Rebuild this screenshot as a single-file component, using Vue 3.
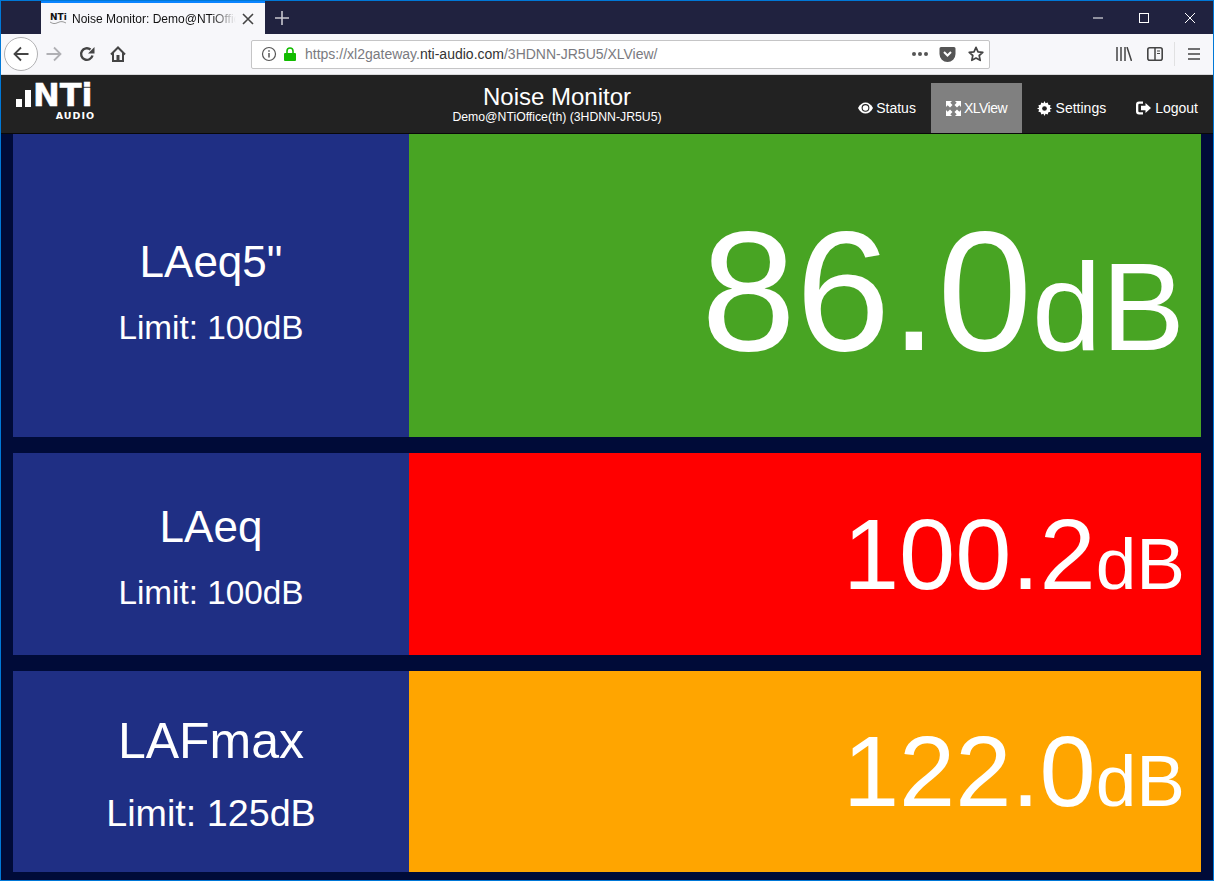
<script setup>
const rows = [
  { name: 'LAeq5"', limit: 'Limit: 100dB', value: '86.0', color: '#48a423', cls: 'big', nameCls: 'n1' },
  { name: 'LAeq', limit: 'Limit: 100dB', value: '100.2', color: '#ff0000', cls: 'mid', nameCls: 'n1' },
  { name: 'LAFmax', limit: 'Limit: 125dB', value: '122.0', color: '#ffa500', cls: 'mid last', nameCls: 'n2' },
]
</script>

<template>
  <div class="window">
    <div class="tabbar">
      <div class="tab">
        <span class="favicon">NTi<svg width="16" height="3" viewBox="0 0 16 3"><path d="M0 1c3 2 5 2 8 .5s5-1 8 .5" stroke="#999" fill="none"/></svg></span>
        <span class="tab-title">Noise Monitor: Demo@NTiOffice(th)</span>
        <svg class="tab-x" width="12" height="12" viewBox="0 0 12 12"><path d="M1 1l10 10M11 1L1 11" stroke="#444" stroke-width="1.6" fill="none"/></svg>
      </div>
      <svg class="newtab" width="16" height="16" viewBox="0 0 16 16"><path d="M8 1v14M1 8h14" stroke="#c8c8d0" stroke-width="1.6" fill="none"/></svg>
      <div class="winctl">
        <svg width="12" height="12" viewBox="0 0 12 12"><path d="M1 6h10" stroke="#fff" fill="none"/></svg>
        <svg width="12" height="12" viewBox="0 0 12 12"><rect x="1.5" y="1.5" width="9" height="9" stroke="#fff" fill="none"/></svg>
        <svg width="12" height="12" viewBox="0 0 12 12"><path d="M1 1l10 10M11 1L1 11" stroke="#fff" fill="none"/></svg>
      </div>
    </div>
    <div class="toolbar">
      <div class="backbtn">
        <svg width="16" height="16" viewBox="0 0 16 16"><path d="M15.500 8H1.500M8 1.500L1.500 8 8 14.500" stroke="#444" stroke-width="1.8" fill="none"/></svg>
      </div>
      <svg class="tb fwd" width="16" height="16" viewBox="0 0 16 16"><path d="M.5 8h14M8 1.500L14.500 8 8 14.500" stroke="#b0b0b4" stroke-width="1.8" fill="none"/></svg>
      <svg class="tb reload" width="16" height="16" viewBox="0 0 16 16"><path d="M13.500 9.500A5.800 5.800 0 1 1 11.500 3.500" stroke="#444" stroke-width="2.400" fill="none"/><path d="M15.500 1v6.500H9z" fill="#444"/></svg>
      <svg class="tb home" width="16" height="16" viewBox="0 0 16 16"><path d="M1 8.500l7-7 7 7M3 7v8h10V7" stroke="#444" stroke-width="2" fill="none"/><rect x="6.500" y="9" width="3" height="6" fill="#444"/></svg>
      <div class="urlbar">
        <svg width="16" height="16" viewBox="0 0 16 16"><circle cx="8" cy="8" r="6.500" stroke="#555" stroke-width="1.200" fill="none"/><path d="M8 7v4.500M8 4.200v1.600" stroke="#555" stroke-width="1.500" fill="none"/></svg>
        <svg class="lock" width="14" height="14" viewBox="0 0 14 14"><path d="M4 6V4a3 3 0 0 1 6 0v2" stroke="#12bc00" stroke-width="1.600" fill="none"/><rect x="1" y="6" width="12" height="8" rx="1" fill="#12bc00"/></svg>
        <span class="url"><span class="dim">https://xl2gateway.</span><span class="host">nti-audio.com</span><span class="dim">/3HDNN-JR5U5/XLView/</span></span>
        <span class="dots"><i></i><i></i><i></i></span>
        <svg class="pocket" width="17" height="15" viewBox="0 0 16 15"><path d="M1.500 0h13A1.500 1.500 0 0 1 16 1.500V7a8 8 0 0 1-16 0V1.500A1.500 1.500 0 0 1 1.500 0z" fill="#555"/><path d="M4.500 5L8 8.500 11.500 5" stroke="#fff" stroke-width="2" fill="none"/></svg>
        <svg class="star" width="16" height="16" viewBox="0 0 16 16"><path d="M8 1.300l2 4.500 4.800.5-3.600 3.200 1 4.800L8 12l-4.200 2.300 1-4.800L1.200 6.300 6 5.800z" stroke="#444" stroke-width="1.700" fill="none" stroke-linejoin="round"/></svg>
      </div>
      <svg class="lib" width="16" height="14" viewBox="0 0 16 14"><path d="M1 0v14M5 0v14M9 0v14M11 0l4.500 14" stroke="#444" stroke-width="1.500" fill="none"/></svg>
      <svg class="side" width="16" height="14" viewBox="0 0 16 14"><rect x=".8" y=".8" width="14.400" height="12.400" rx="2" stroke="#444" stroke-width="1.600" fill="none"/><path d="M8 1v12" stroke="#444" stroke-width="1.500"/><path d="M10 4h3M10 6.500h3" stroke="#444"/></svg>
      <span class="sep"></span>
      <svg class="menu" width="12" height="12" viewBox="0 0 12 12"><path d="M0 1h12M0 6h12M0 11h12" stroke="#444" stroke-width="1.700" fill="none"/></svg>
    </div>
    <header class="appbar">
      <div class="logo">
        <div class="logo-main">
          <span class="bars"><i class="b1"></i><i class="b2"></i></span>
          <span class="logo-text">NTi</span>
        </div>
        <div class="logo-sub">AUDIO</div>
      </div>
      <div class="title">
        <div class="t1">Noise Monitor</div>
        <div class="t2">Demo@NTiOffice(th) (3HDNN-JR5U5)</div>
      </div>
      <nav class="nav">
        <a class="item">
          <svg width="15" height="12" viewBox="0 0 15 12"><path d="M0 6C2 2.200 4.500.4 7.500.4S13 2.200 15 6C13 9.800 10.500 11.600 7.500 11.600S2 9.800 0 6z" fill="#fff"/><circle cx="7.500" cy="5.800" r="3.900" fill="#222"/><circle cx="7.500" cy="6" r="2.800" fill="#fff"/></svg>
          Status
        </a>
        <a class="item active">
          <svg width="15" height="15" viewBox="0 0 15 15"><path d="M0 0h6L4.300 1.700 6.500 4 4 6.500 1.700 4.300 0 6zM15 0v6l-1.700-1.700L11 6.500 8.500 4l2.200-2.300L9 0zM0 15V9l1.700 1.700L4 8.500 6.500 11l-2.200 2.300L6 15zM15 15H9l1.700-1.700L8.500 11 11 8.500l2.300 2.200L15 9z" fill="#fff"/></svg>
          XLView
        </a>
        <a class="item wide">
          <svg width="15" height="15" viewBox="0 0 14 14"><path d="M7 0l1 2 2-.7.600 2.100 2.100.600L12 6l2 1-2 1 .7 2-2.100.600-.6 2.100L8 12l-1 2-1-2-2 .7-.6-2.100-2.100-.600L2 8 0 7l2-1-.7-2 2.100-.600.600-2.100L6 2z" fill="#fff"/><circle cx="7" cy="7" r="2.200" fill="#222"/></svg>
          Settings
        </a>
        <a class="item wider">
          <svg width="15" height="14" viewBox="0 0 15 14"><path d="M7 .5H3A3 3 0 0 0 0 3.500v7a3 3 0 0 0 3 3h4v-2.300H3.500a1.200 1.200 0 0 1-1.200-1.200V4a1.200 1.200 0 0 1 1.200-1.200H7z" fill="#fff"/><path d="M9.500 2L15 7l-5.500 5V9.300H5V4.700h4.500z" fill="#fff"/></svg>
          Logout
        </a>
      </nav>
    </header>
    <main class="content">
      <section v-for="r in rows" :key="r.name" class="row" :class="r.cls">
        <div class="label">
          <div class="name" :class="r.nameCls">{{ r.name }}</div>
          <div class="limit" :class="r.nameCls">{{ r.limit }}</div>
        </div>
        <div class="reading" :style="{ background: r.color }">
          <div class="figure"><span class="val">{{ r.value }}</span><span class="unit">dB</span></div>
        </div>
      </section>
    </main>
  </div>
</template>

<style>
html, body { margin: 0; overflow: hidden; }
</style>

<style scoped>
.window {
  width: 1214px; height: 881px; box-sizing: border-box;
  border: 1px solid #0078d7;
  background: #000b38;
  display: flex; flex-direction: column;
  font-family: "Liberation Sans", Arial, sans-serif;
  overflow: hidden;
}
.tabbar { height: 33px; background: #20223f; display: flex; align-items: flex-start; flex: none; }
.tab {
  margin-left: 40px; width: 224px; height: 33px; background: #f7f7fa;
  border-top: 2px solid #0a84ff; box-sizing: border-box;
  display: flex; align-items: center; padding: 0 11px 0 9px;
}
.favicon { font: bold 9px/8px "DejaVu Sans", sans-serif; width: 16px; margin-right: 6px; color: #111; flex: none; display: flex; flex-direction: column; }
.tab-title {
  font: 12px "Liberation Sans", sans-serif; color: #111; white-space: nowrap; overflow: hidden;
  flex: 1; -webkit-mask-image: linear-gradient(to right, #000 85%, transparent);
  mask-image: linear-gradient(to right, #000 85%, transparent);
}
.tab-x { margin-left: 6px; flex: none; }
.newtab { margin: 9px 0 0 9px; }
.winctl { margin-left: auto; display: flex; gap: 34px; padding: 11px 17px 0 0; }
.toolbar {
  background: #f7f7fa; border-bottom: 1px solid #d8d8da; box-sizing: border-box; flex: none;
  display: flex; align-items: center; height: 41px; padding-left: 3px;
}
.backbtn {
  width: 34px; height: 34px; border: 1px solid #b1b1b3; border-radius: 50%; background: #fff; box-sizing: border-box;
  display: flex; align-items: center; justify-content: center;
}
.tb { flex: none; }
.fwd { margin-left: 8px; }
.reload { margin-left: 17px; }
.home { margin-left: 15px; }
.urlbar {
  margin-left: 125px; width: 739px; height: 29px; box-sizing: border-box; background: #fff;
  border: 1px solid #c5c5c6; border-radius: 2px; display: flex; align-items: center; padding: 0 5px 0 9px;
}
.lock { margin-left: 6px; }
.url { margin-left: 8px; font-size: 14px; white-space: nowrap; flex: 1; }
.dim { color: #7a7a80; }
.host { color: #333; }
.dots { display: flex; gap: 2px; margin-right: 11px; }
.dots i { width: 4px; height: 4px; border-radius: 50%; background: #555; }
.pocket { margin-right: 12px; }
.lib { margin-left: 126px; }
.side { margin-left: 15px; }
.sep { width: 1px; height: 24px; background: #e1e1e2; margin-left: 11px; }
.menu { margin-left: 13px; }
.appbar {
  height: 59px; background: #222; flex: none; display: flex; position: relative; border-bottom: 1px solid #080808; box-sizing: border-box;
}
.logo { margin: 8px 0 0 15px; width: 79px; color: #fff; }
.logo-main { display: flex; align-items: flex-end; height: 24px; }
.bars { display: flex; align-items: flex-end; gap: 3px; margin-right: 2px; }
.bars i { display: block; background: #fff; width: 6px; }
.b1 { height: 8px; } .b2 { height: 17px; }
.logo-text { font: bold 32px/24px "DejaVu Sans", sans-serif; -webkit-text-stroke: .5px #fff; }
.logo-sub { font: bold 9.500px/10px "DejaVu Sans", sans-serif; text-align: right; letter-spacing: 1px; margin-top: 4px; }
.title { position: absolute; left: 0; top: 8px; text-align: center; color: #fff; width: 1112px; pointer-events: none; }
.t1 { font-size: 24px; line-height: 27px; }
.t2 { font-size: 12.250px; line-height: 15px; }
.nav { margin-left: auto; display: flex; height: 50px; margin-top: 8px; }
.item { display: flex; align-items: center; gap: 3px; color: #fff; font-size: 14px; height: 50px; padding: 0 15px; box-sizing: border-box; white-space: nowrap; }
.active { background: #808080; letter-spacing: -.5px; }
.wide { gap: 3.500px; }
.wider { gap: 4px; }
.content { flex: 1; padding: 0 12px; display: flex; flex-direction: column; gap: 16px; min-height: 0; }
.row { display: flex; flex: none; }
.big { height: 303px; }
.mid { height: 202px; }
.last { height: 201px; }
.label {
  width: 396px; background: #1f2f84; color: #fff; display: flex; flex-direction: column; align-items: center; justify-content: center;
  box-sizing: border-box; padding-top: 4px;
}
.big .label { padding-top: 12px; }
.name { font-size: 44px; line-height: 51px; }
.limit { font-size: 33.300px; line-height: 38px; margin-top: 22px; }
.name.n2 { font-size: 50px; line-height: 57px; }
.limit.n2 { font-size: 37.700px; line-height: 43px; margin-top: 22px; }
.reading { flex: 1; color: #fff; display: flex; align-items: center; justify-content: flex-end; padding-right: 16px; white-space: nowrap; box-sizing: border-box; }
.big .reading { padding-top: 11px; }
.figure { line-height: 1; }
.big .val { font-size: 170px; }
.big .unit { font-size: 125px; }
.mid .val { font-size: 101px; }
.mid .unit { font-size: 73px; }
</style>
